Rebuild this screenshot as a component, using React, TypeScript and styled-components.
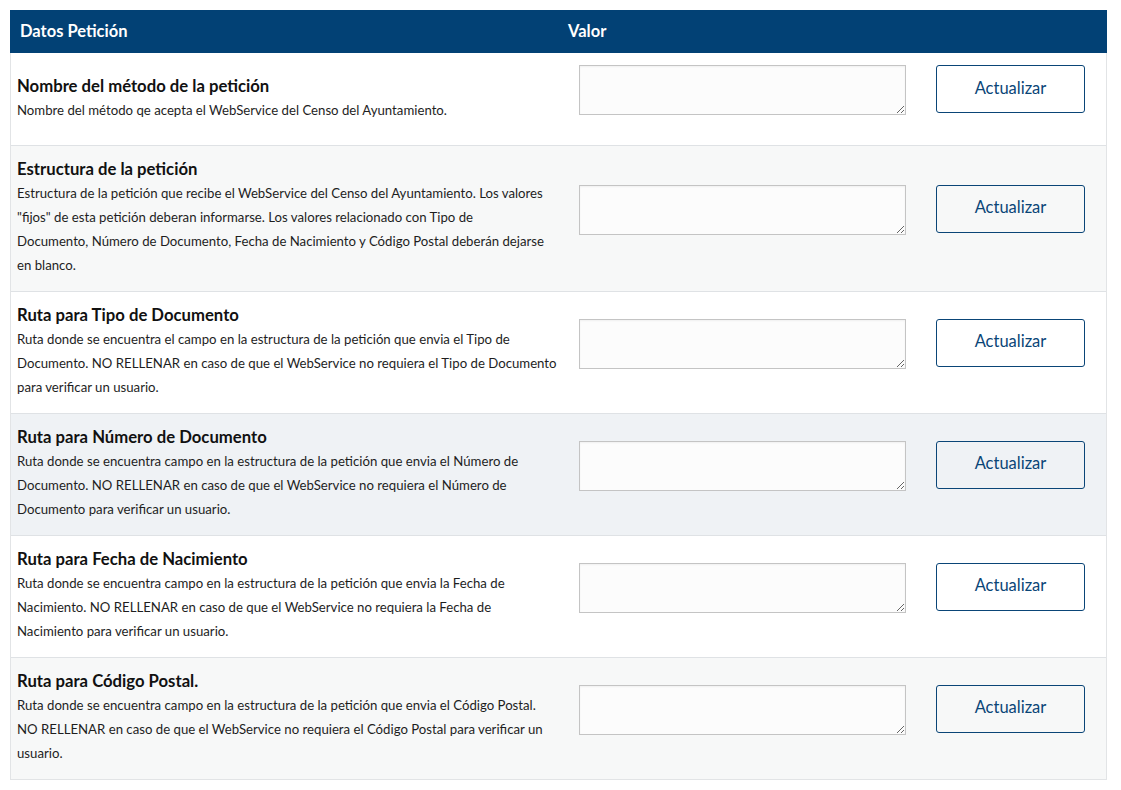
import React from "react";
import styled, { createGlobalStyle } from "styled-components";

const Global = createGlobalStyle`
  html, body { margin: 0; padding: 0; background: #ffffff; }
  body { font-family: "Source Sans Pro", Lato, "Liberation Sans", sans-serif; color: #1a1a1a; }
  * { box-sizing: border-box; }
`;

const Page = styled.div`
  padding: 10px 14px 10px 10px;
`;

const Table = styled.div`
  width: 1097px;
  border-left: 1px solid #e2e4e6;
  border-right: 1px solid #e2e4e6;
  border-bottom: 1px solid #e2e4e6;
`;

const Header = styled.div`
  display: grid;
  grid-template-columns: 549px 1fr;
  height: 43px;
  align-items: center;
  padding-bottom: 2px;
  background: #024175;
  color: #ffffff;
  font-weight: 700;
  font-size: 16.5px;
  margin: 0 -1px;
`;

const HeadCell = styled.div<{ $pad: number }>`
  padding-left: ${(p) => p.$pad}px;
`;

const Row = styled.div<{ $bg: string; $first: boolean }>`
  display: grid;
  grid-template-columns: 549px 360px 1fr;
  background: ${(p) => p.$bg};
  border-top: ${(p) => (p.$first ? "none" : "1px solid #dfe2e5")};
  min-height: 92px;
`;

const InfoCell = styled.div`
  display: flex;
  flex-direction: column;
  justify-content: center;
  padding: 11px 8px 14px 6px;
`;

const Title = styled.div`
  font-size: 16.7px;
  font-weight: 700;
  line-height: 24px;
  color: #111111;
`;

const Desc = styled.div`
  font-size: 13.2px;
  line-height: 24px;
  color: #1e1e1e;
  white-space: nowrap;
`;

const FieldCell = styled.div`
  display: flex;
  align-items: center;
  padding: 11px 0 11px 19px;
`;

const Area = styled.textarea`
  width: 327px;
  height: 50px;
  margin: 0 0 18px 0;
  border: 1px solid #c4c4c4;
  background: #fcfcfc;
  box-shadow: inset 0 1px 2px rgba(0, 0, 0, 0.05);
  border-radius: 0;
  resize: vertical;
  font-family: inherit;
`;

const ButtonCell = styled.div`
  display: flex;
  align-items: center;
  padding: 11px 0 11px 16px;
`;

const Button = styled.button`
  width: 149px;
  height: 48px;
  margin-bottom: 20px;
  padding: 0 0 3px 0;
  border: 1px solid #0a4577;
  border-radius: 3px;
  background: transparent;
  color: #0a4577;
  font-family: inherit;
  font-size: 16.5px;
  cursor: pointer;
`;

type Item = { title: string; lines: string[]; bg: string };

const items: Item[] = [
  {
    title: "Nombre del método de la petición",
    lines: ["Nombre del método qe acepta el WebService del Censo del Ayuntamiento."],
    bg: "#ffffff",
  },
  {
    title: "Estructura de la petición",
    lines: [
      "Estructura de la petición que recibe el WebService del Censo del Ayuntamiento. Los valores",
      "\"fijos\" de esta petición deberan informarse. Los valores relacionado con Tipo de",
      "Documento, Número de Documento, Fecha de Nacimiento y Código Postal deberán dejarse",
      "en blanco.",
    ],
    bg: "#f7f8f8",
  },
  {
    title: "Ruta para Tipo de Documento",
    lines: [
      "Ruta donde se encuentra el campo en la estructura de la petición que envia el Tipo de",
      "Documento. NO RELLENAR en caso de que el WebService no requiera el Tipo de Documento",
      "para verificar un usuario.",
    ],
    bg: "#ffffff",
  },
  {
    title: "Ruta para Número de Documento",
    lines: [
      "Ruta donde se encuentra campo en la estructura de la petición que envia el Número de",
      "Documento. NO RELLENAR en caso de que el WebService no requiera el Número de",
      "Documento para verificar un usuario.",
    ],
    bg: "#eff2f5",
  },
  {
    title: "Ruta para Fecha de Nacimiento",
    lines: [
      "Ruta donde se encuentra campo en la estructura de la petición que envia la Fecha de",
      "Nacimiento. NO RELLENAR en caso de que el WebService no requiera la Fecha de",
      "Nacimiento para verificar un usuario.",
    ],
    bg: "#ffffff",
  },
  {
    title: "Ruta para Código Postal.",
    lines: [
      "Ruta donde se encuentra campo en la estructura de la petición que envia el Código Postal.",
      "NO RELLENAR en caso de que el WebService no requiera el Código Postal para verificar un",
      "usuario.",
    ],
    bg: "#f7f8f8",
  },
];

export default function App() {
  return (
    <Page>
      <Global />
      <Table>
        <Header>
          <HeadCell $pad={10}>Datos Petición</HeadCell>
          <HeadCell $pad={9}>Valor</HeadCell>
        </Header>
        {items.map((it, idx) => (
          <Row key={it.title} $bg={it.bg} $first={idx === 0}>
            <InfoCell>
              <Title>{it.title}</Title>
              {it.lines.map((l, i) => (
                <Desc key={i}>{l}</Desc>
              ))}
            </InfoCell>
            <FieldCell>
              <Area />
            </FieldCell>
            <ButtonCell>
              <Button>Actualizar</Button>
            </ButtonCell>
          </Row>
        ))}
      </Table>
    </Page>
  );
}
